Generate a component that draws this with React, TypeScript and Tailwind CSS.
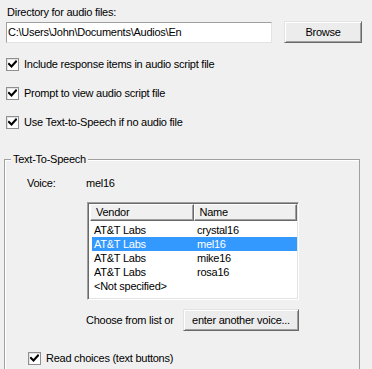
import React from "react";

function Check({ className = "" }: { className?: string }) {
  return (
    <span className={"flex h-[13px] w-[13px] shrink-0 items-center justify-center border border-[#8f8f8f] bg-white shadow-[inset_1px_1px_0_#e3e3e3] " + className}>
      <svg width="9" height="9" viewBox="0 0 9 9">
        <path d="M1 4 L3.5 6.5 L8 1.5" fill="none" stroke="#000" strokeWidth="2" strokeLinecap="square" />
      </svg>
    </span>
  );
}

function CheckRow({ label, className = "" }: { label: string; className?: string }) {
  return (
    <div className={"flex h-[13px] items-center " + className}>
      <Check />
      <span className="ml-[5px] leading-[13px]">{label}</span>
    </div>
  );
}

function Btn({ children, className = "" }: { children: React.ReactNode; className?: string }) {
  return (
    <div
      className={
        "flex h-[22px] items-center justify-center border border-t-[#e3e3e3] border-l-[#e3e3e3] border-r-[#696969] border-b-[#696969] bg-[#ececec] shadow-[inset_1px_1px_0_#ffffff,inset_-1px_-1px_0_#a0a0a0] " +
        className
      }
    >
      {children}
    </div>
  );
}

const rows = [
  { v: "AT&T Labs", n: "crystal16", sel: false },
  { v: "AT&T Labs", n: "mel16", sel: true },
  { v: "AT&T Labs", n: "mike16", sel: false },
  { v: "AT&T Labs", n: "rosa16", sel: false },
  { v: "<Not specified>", n: "", sel: false },
];

export default function App() {
  return (
    <div
      className="h-[369px] w-[372px] overflow-hidden bg-[#f0f0f0] text-[11px] leading-[13px] tracking-[-0.25px] text-black"
      style={{ fontFamily: '"Liberation Sans", Arial, sans-serif' }}
    >
      <div className="pl-[7px] pt-[6px]">Directory for audio files:</div>
      <div className="mt-[3px] flex items-start pl-[6px]">
        <div className="flex h-[21px] w-[266px] items-center border border-t-[#a0a0a0] border-l-[#a0a0a0] border-r-[#e3e3e3] border-b-[#e3e3e3] bg-white pl-[1px]">
          {"C:\\Users\\John\\Documents\\Audios\\En"}
        </div>
        <Btn className="ml-[12px] mt-[-1px] w-[78px]">Browse</Btn>
      </div>
      <div className="pl-[6px]">
        <CheckRow className="mt-[15px]" label="Include response items in audio script file" />
        <CheckRow className="mt-[16px]" label="Prompt to view audio script file" />
        <CheckRow className="mt-[16px]" label="Use Text-to-Speech if no audio file" />
      </div>

      <div className="relative ml-[4px] mt-[30px] h-[260px] w-[356px] border border-[#a0a0a0] shadow-[inset_1px_1px_0_#ffffff]">
        <div className="absolute left-[6px] top-[-7px] bg-[#f0f0f0] px-[2px] leading-[13px]">Text-To-Speech</div>
        <div className="flex pl-[22px] pt-[17px]">
          <span className="w-[59px]">Voice:</span>
          <span>mel16</span>
        </div>
        <div className="ml-[82px] mt-[12px] h-[98px] w-[212px] border border-t-[#a0a0a0] border-l-[#a0a0a0] border-r-white border-b-white bg-white shadow-[inset_1px_1px_0_#696969,inset_-1px_-1px_0_#e3e3e3] p-[1px] pl-[2px]">
          <div className="flex h-[17px]">
            <div className="flex w-[104px] items-center border border-t-white border-l-white border-r-[#696969] border-b-[#696969] bg-[#f0f0f0] pl-[5px] shadow-[inset_-1px_-1px_0_#a0a0a0]">
              Vendor
            </div>
            <div className="flex w-[104px] items-center border border-t-white border-l-white border-r-[#696969] border-b-[#696969] bg-[#f0f0f0] pl-[5px] shadow-[inset_-1px_-1px_0_#a0a0a0]">
              Name
            </div>
          </div>
          <div className="pt-[2px]">
            {rows.map((r, i) => (
              <div
                key={i}
                className={
                  "ml-[2px] flex h-[14px] items-center " + (r.sel ? "bg-[#3399ff] text-white" : "")
                }
              >
                <span className="w-[105px] pl-[2px]">{r.v}</span>
                <span>{r.n}</span>
              </div>
            ))}
          </div>
        </div>
        <div className="mt-[9px] flex items-center">
          <span className="w-[178px] pl-[81px]">Choose from list or</span>
          <Btn className="w-[116px]">enter another voice...</Btn>
        </div>
        <CheckRow className="ml-[23px] mt-[21px]" label="Read choices (text buttons)" />
      </div>
    </div>
  );
}
